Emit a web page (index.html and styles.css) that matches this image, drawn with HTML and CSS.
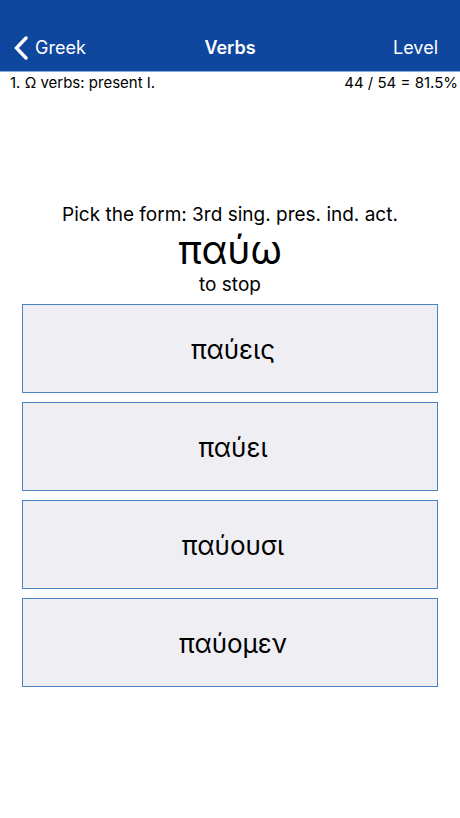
FILE: index.html
```html
<!DOCTYPE html>
<html lang="en">
<head>
<meta charset="utf-8">
<meta name="viewport" content="width=device-width, initial-scale=1">
<title>Verbs</title>
<link rel="stylesheet" href="styles.css">
</head>
<body>
<header class="navbar">
  <a class="nav-link back" href="#greek">
    <svg class="chevron" viewBox="0 0 14 24" aria-hidden="true"><path d="M12 2 2.500 12 12 22"/></svg>
    <span>Greek</span>
  </a>
  <h1 class="title">Verbs</h1>
  <button class="nav-link level" type="button">Level</button>
</header>
<div class="status">
  <span>1. Ω verbs: present I.</span>
  <span>44 / 54 = 81.5%</span>
</div>
<main class="quiz">
  <p class="prompt">Pick the form: 3rd sing. pres. ind. act.</p>
  <h2 class="word" lang="el">παύω</h2>
  <p class="meaning">to stop</p>
  <div class="answers" lang="el">
    <button class="answer" type="button">παύεις</button>
    <button class="answer" type="button">παύει</button>
    <button class="answer" type="button">παύουσι</button>
    <button class="answer" type="button">παύομεν</button>
  </div>
</main>
</body>
</html>
```
FILE: styles.css
```css
* {
  box-sizing: border-box;
}

body {
  margin: 0;
  background: #fff;
  color: #000;
  font-family: Inter, "Liberation Sans", sans-serif;
}

.navbar {
  display: grid;
  grid-template-columns: 1fr auto 1fr;
  align-items: center;
  padding: 36px 14px 11px;
  border-bottom: 1px solid #88abdc;
  background: #10479e;
  color: #fff;
}

.nav-link {
  padding: 0;
  border: 0;
  background: none;
  color: inherit;
  font: inherit;
  font-size: 18px;
  line-height: 24px;
  text-decoration: none;
}

.back {
  display: flex;
  align-items: center;
  gap: 7px;
}

.chevron {
  width: 14px;
  height: 24px;
  fill: none;
  stroke: currentColor;
  stroke-width: 3.4;
  stroke-linecap: round;
}

.title {
  margin: 0;
  font-size: 18px;
  line-height: 24px;
  font-weight: 600;
}

.level {
  justify-self: end;
  margin-right: 8px;
}

.status {
  display: flex;
  justify-content: space-between;
  padding: 1px 2px 0 10px;
  font-size: 15px;
  line-height: 20px;
}

.quiz {
  padding: 110px 22px 24px;
  text-align: center;
}

.prompt,
.meaning {
  margin: 0;
  font-size: 19px;
  line-height: 24px;
}

.word {
  margin: 0;
  font-size: 39px;
  line-height: 46px;
  font-weight: 400;
}

.answers {
  display: grid;
  gap: 9px;
  margin-top: 7px;
}

.answer {
  height: 89px;
  padding: 2px 0 0 6px;
  border: 1px solid #4a82c3;
  border-radius: 0;
  background: #efeef3;
  color: #000;
  font: inherit;
  font-size: 26px;
}
```
